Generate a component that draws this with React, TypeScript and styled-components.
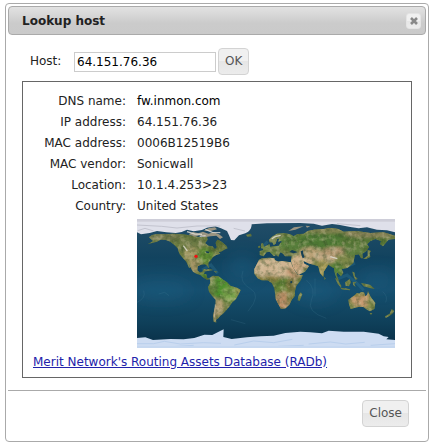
import React, { useState } from "react";
import styled, { createGlobalStyle } from "styled-components";

const GlobalStyle = createGlobalStyle`
  *, *::before, *::after { box-sizing: border-box; }
  body {
    margin: 0;
    background: #fff;
    color: #222;
    font: 12px/21px Verdana, "DejaVu Sans", sans-serif;
  }
`;

const Dialog = styled.section`
  margin: 3px 4px 3px 5px;
  padding: 2px;
  border: 1px solid #aaa;
  border-radius: 4px;
  background: #fff;
`;

const TitleBar = styled.header`
  display: flex;
  align-items: center;
  justify-content: space-between;
  height: 29px;
  padding: 1px 4px 0 13px;
  border: 1px solid #aaa;
  border-radius: 4px;
  background: linear-gradient(#e2e2e2, #cbcbcb 60%, #cacaca);
`;

const Title = styled.h1`
  margin: 0;
  font-size: 12px;
  font-weight: bold;
`;

const Button = styled.button`
  height: 27px;
  padding: 0 6px;
  border: 1px solid #d3d3d3;
  border-radius: 4px;
  background: linear-gradient(#f0f0f0 50%, #e6e6e6 50%, #ececec);
  color: #555;
  font: inherit;
`;

const IconButton = styled(Button)`
  display: grid;
  place-items: center;
  width: 15px;
  height: 16px;
  padding: 0;
  border-color: #e4e4e4;
  border-radius: 3px;
`;

const Content = styled.div`
  padding: 13px 14px 12px;
`;

const HostForm = styled.form`
  display: flex;
  align-items: center;
  padding-left: 8px;
  margin-bottom: 6px;
`;

const HostLabel = styled.label`
  width: 44px;
`;

const HostInput = styled.input`
  width: 142px;
  height: 20px;
  margin-right: 2px;
  padding: 1px 2px 0;
  border: 1px solid #ccc;
  background: #fff;
  color: #000;
  font: inherit;
`;

const Results = styled.div`
  padding: 9px 16px 4px 10px;
  border: 1px solid #666;
`;

const Details = styled.table`
  width: 100%;
  border-collapse: collapse;
`;

const Name = styled.th`
  width: 104px;
  padding: 0 11px 0 0;
  font-weight: normal;
  text-align: right;
  white-space: nowrap;
`;

const Value = styled.td<{ $strong?: boolean }>`
  padding: 0;
  color: ${({ $strong }) => ($strong ? "#000" : "#222")};
`;

const MapSvg = styled.svg`
  display: block;
  width: 100%;
  margin: 2px 0 4px;
`;

const Link = styled.a`
  color: #2222aa;
`;

const Footer = styled.footer`
  display: flex;
  justify-content: flex-end;
  padding: 9px 17px 12px;
  border-top: 1px solid #aaa;
`;

const LAND = [
  "M36 55L45 48 60 45 85 46 110 44 140 46 165 50 190 55 210 52 212 62 204 72 214 80 226 82 234 91 240 85 236 72 241 62 250 66 258 72 268 80 272 88 262 92 252 98 245 100 250 104 238 108 228 114 222 122 215 130 214 138 217 149 210 140 204 136 192 137 182 142 181 154 188 160 196 158 200 150 206 150 203 160 200 164 208 166 210 176 221 180 210 182 200 176 190 168 178 164 168 158 162 148 155 134 159 146 156 146 148 128 138 118 128 106 124 96 122 88 112 78 100 68 85 62 70 62 60 68 45 72 32 76 48 66Z",
  "M218 176L228 170 245 172 258 182 270 190 280 200 300 206 311 213 305 226 297 240 286 250 278 262 268 274 258 284 250 290 244 298 237 302 238 311 230 308 228 290 232 272 236 256 236 242 226 232 216 218 213 204 220 192Z",
  "M366 122L375 118 398 116 412 118 414 124 425 128 435 126 450 128 462 130 466 142 474 156 482 168 498 168 490 186 478 200 474 216 474 230 464 242 458 256 446 268 432 270 424 256 416 240 414 222 412 208 404 192 392 184 374 184 362 178 352 164 352 150 360 134Z",
  "M368 108L368 96 380 94 376 86 388 80 397 76 400 84 412 82 426 80 430 72 438 68 430 66 424 68 427 58 420 60 416 74 410 78 406 70 398 70 396 62 404 54 420 44 440 42 460 46 470 52 480 46 500 44 512 36 530 32 560 30 580 26 604 30 620 38 660 36 700 42 740 40 774 50 774 60 755 62 748 70 738 82 730 76 732 66 715 60 700 66 690 76 696 84 688 96 676 104 678 118 672 118 666 106 654 107 649 132 631 147 614 150 619 162 612 172 601 160 598 166 606 185 600 182 594 164 591 147 584 144 574 137 560 158 559 174 549 162 544 142 529 137 514 133 499 125 502 134 516 141 504 158 484 168 469 146 462 126 464 112 444 112 438 104 430 100 424 113 412 104 406 98 416 110 410 111 398 98 388 100 380 112Z",
  "M634 242L654 228 660 222 667 224 672 219 681 220 685 232 690 228 693 216 701 234 715 252 712 270 699 277 690 272 679 264 664 264 641 270 636 256Z",
  "M491 220L496 226 488 246 482 244 484 230ZM698 282L706 282 702 288ZM764 270L772 276 766 284 756 292 746 297 744 292 758 284ZM594 176L602 182 613 200 612 206 602 194ZM610 206L625 208 640 211 638 214 614 211ZM624 190L638 180 642 190 636 202 626 200ZM647 190L659 188 652 194 656 204 649 199ZM672 192L685 194 700 198 713 210 698 207 680 202ZM646 158L652 160 654 172 662 180 655 182 649 170ZM692 92L702 96 698 102 700 114 688 120 678 120 692 110ZM372 74L378 72 381 86 372 88ZM364 81L370 80 369 86 363 86ZM327 47L342 44 344 52 331 53ZM196 158Q210 145 228 153L218 155ZM230 156L242 158 236 161ZM561 174L566 178 563 183Z",
].join("");

const ARCTIC_ICE =
  "M0 0H774V40L750 34 720 32 690 25 665 28 640 24 605 17 585 15 555 20 530 14 490 12 390 13 344 16C344 28 338 38 325 43L306 49 292 64 282 63 276 49 270 36 252 28 235 22 210 26 195 33 170 37 150 32 134 39 116 42 88 40 60 36 38 42 12 46 0 40Z";

const SOUTH_ICE =
  "M0 357L25 355 48 363 100 360 140 361 172 357 202 347 226 348 242 340 260 331 259 354 284 360 330 355 370 352 410 350 445 342 490 338 520 340 555 343 575 335 620 338 680 338 725 344 740 352 755 354 748 361 774 363V387H0Z";

type Patch = [number, number, number, number, string];

const PATCHES: Patch[] = [
  [84, 54, 50, 12, "#73794f"],
  [170, 70, 50, 15, "#6e7c45"],
  [164, 108, 24, 25, "#a09862"],
  [205, 110, 24, 24, "#5b8a32"],
  [244, 74, 25, 18, "#5e7035"],
  [174, 140, 16, 20, "#a29363"],
  [203, 171, 14, 8, "#4f8233"],
  [250, 205, 30, 30, "#4f902f"],
  [278, 226, 23, 24, "#76a048"],
  [229, 202, 12, 22, "#63873f"],
  [247, 266, 14, 26, "#b4a073"],
  [233, 272, 7, 38, "#aa9472"],
  [303, 215, 8, 12, "#a1a156"],
  [409, 148, 65, 32, "#d0b592"],
  [472, 160, 22, 20, "#bd926c"],
  [395, 179, 42, 9, "#847c3d"],
  [438, 202, 25, 24, "#628336"],
  [464, 197, 18, 20, "#7c763c"],
  [440, 244, 28, 27, "#bd8f68"],
  [460, 236, 12, 20, "#828044"],
  [402, 91, 33, 19, "#71894a"],
  [420, 60, 25, 17, "#848f5a"],
  [482, 72, 60, 25, "#587f3a"],
  [580, 63, 95, 28, "#507a34"],
  [680, 65, 70, 25, "#547635"],
  [580, 34, 80, 10, "#81834f"],
  [700, 46, 80, 10, "#888359"],
  [495, 128, 35, 24, "#cfb18b"],
  [480, 148, 20, 20, "#d0ab86"],
  [518, 103, 33, 19, "#b9a176"],
  [574, 113, 44, 18, "#c1a783"],
  [597, 98, 45, 14, "#b2966f"],
  [622, 125, 30, 21, "#7d8848"],
  [655, 95, 34, 18, "#608040"],
  [556, 148, 18, 27, "#a69a54"],
  [599, 151, 19, 22, "#588438"],
  [674, 244, 34, 22, "#c69a70"],
  [666, 226, 20, 8, "#888345"],
  [703, 252, 12, 25, "#899150"],
  [643, 261, 10, 12, "#858b50"],
];

function WorldMap() {
  return (
    <MapSvg viewBox="0 0 774 387" role="img" aria-label="World map with the host location">
      <defs>
        <linearGradient id="ocean" x2="0" y2="1">
          <stop offset="0" stopColor="#234e68" />
          <stop offset="0.3" stopColor="#12435f" />
          <stop offset="0.55" stopColor="#164f6f" />
          <stop offset="0.8" stopColor="#0f405a" />
          <stop offset="1" stopColor="#092d45" />
        </linearGradient>
        <filter id="soft" x="-50%" y="-50%" width="200%" height="200%">
          <feGaussianBlur stdDeviation="5" />
        </filter>
        <filter id="glow" x="-100%" y="-100%" width="300%" height="300%">
          <feGaussianBlur stdDeviation="22" />
        </filter>
        <filter id="coast" x="0" y="0" width="100%" height="100%">
          <feTurbulence type="fractalNoise" baseFrequency="0.16" numOctaves="3" seed="4" result="noise" />
          <feDisplacementMap in="SourceGraphic" in2="noise" scale="3" xChannelSelector="R" yChannelSelector="G" />
        </filter>
        <filter id="terrain" x="0" y="0" width="100%" height="100%">
          <feTurbulence type="fractalNoise" baseFrequency="0.07" numOctaves="3" seed="8" />
          <feColorMatrix values="0 0 0 0 0.04 0 0 0 0 0.08 0 0 0 0 0.02 2.4 0 0 0 -1" />
        </filter>
        <filter id="highland" x="0" y="0" width="100%" height="100%">
          <feTurbulence type="fractalNoise" baseFrequency="0.06" numOctaves="3" seed="15" />
          <feColorMatrix values="0 0 0 0 0.7 0 0 0 0 0.6 0 0 0 0 0.4 0 2.6 0 0 -1.2" />
        </filter>
        <clipPath id="land">
          <path d={LAND} />
        </clipPath>
      </defs>
      <rect width="774" height="387" fill="url(#ocean)" />
      <g filter="url(#glow)" fill="#1f5d80" opacity="0.5">
        <ellipse cx="72" cy="215" rx="90" ry="30" />
        <ellipse cx="315" cy="145" rx="45" ry="35" />
        <ellipse cx="535" cy="215" rx="65" ry="35" />
        <ellipse cx="720" cy="184" rx="55" ry="27" />
      </g>
      <path
        d="M0 250Q28 237 20 215M65 225L83 220 96 230M318 155Q305 190 340 209T333 277M508 183Q539 210 523 244T568 298M534 178V232M737 218Q754 232 746 250M282 302L325 314"
        fill="none"
        stroke="#4c829b"
        strokeWidth="3"
        opacity="0.2"
      />
      <path
        d="M195 153L222 138 242 163M604 179L630 168 660 193 680 214M628 143L654 132M374 86L392 68"
        fill="none"
        stroke="#367d9c"
        strokeWidth="9"
        opacity="0.3"
      />
      <g filter="url(#coast)">
        <g clipPath="url(#land)">
          <rect width="774" height="387" fill="#6c7c40" />
          <g filter="url(#soft)">
            {PATCHES.map(([x, y, rx, ry, fill]) => (
              <ellipse key={`${x}-${y}`} cx={x} cy={y} rx={rx} ry={ry} fill={fill} />
            ))}
          </g>
          <rect width="774" height="387" filter="url(#terrain)" opacity="0.5" />
          <rect width="774" height="387" filter="url(#highland)" opacity="0.45" />
        </g>
        <path
          d="M457 99L465 93 474 96 482 100 470 103ZM491 97L498 94 499 104 503 115 497 118 493 107ZM205 96L217 98 216 103 209 102ZM460 187L465 186 465 192 460 193Z"
          fill="#173f55"
        />
        <path
          d="M155 46L168 39 184 43 198 38 214 44 230 40 246 46 258 55 249 60 238 50 220 52 203 55 187 49 174 53ZM200 35L216 27 234 25 240 31 221 36ZM454 36L471 25 500 22 475 32ZM506 20L520 22 510 26Z"
          fill="#9b9582"
        />
        <path
          d="M150 38L173 45 195 46M205 31L226 40 250 41M188 52L206 50M139 80L151 96M404 60L414 53 431 49M580 113L601 119"
          fill="none"
          stroke="#e2ded7"
          strokeWidth="4"
          opacity="0.8"
        />
        <path d="M235 256L232 295" fill="none" stroke="#d0c2a6" strokeWidth="3" opacity="0.6" />
        <path d={ARCTIC_ICE} fill="#dfe0ea" />
        <path
          d="M0 18L74 22 120 27 180 21 250 21M290 28L324 36M2 35L24 28 50 36M600 14L670 20"
          fill="none"
          stroke="#c3c4cf"
          strokeWidth="3"
        />
        <path d={SOUTH_ICE} fill="#cddcf2" />
        <path
          d="M0 374H50L82 367 130 375 200 371 252 373M292 378L350 366 410 371 466 361M515 375L580 369 626 375 683 370M701 379L774 374M90 384L170 379M424 382L500 379"
          fill="none"
          stroke="#b9cfec"
          strokeWidth="3"
        />
      </g>
      <rect width="774" height="8" fill="#ceced9" />
      <rect y="381" width="774" height="6" fill="#c6d8f0" />
      <circle cx="177" cy="112" r="5" fill="#f01212" />
    </MapSvg>
  );
}

const ROWS = [
  { name: "DNS name:", value: "fw.inmon.com", strong: true },
  { name: "IP address:", value: "64.151.76.36" },
  { name: "MAC address:", value: "0006B12519B6" },
  { name: "MAC vendor:", value: "Sonicwall" },
  { name: "Location:", value: "10.1.4.253>23" },
  { name: "Country:", value: "United States" },
];

export default function App() {
  const [host, setHost] = useState("64.151.76.36");

  return (
    <>
      <GlobalStyle />
      <Dialog role="dialog" aria-labelledby="dialog-title">
        <TitleBar>
          <Title id="dialog-title">Lookup host</Title>
          <IconButton type="button" aria-label="Close dialog">
            <svg width="8" height="8" viewBox="0 0 8 8" aria-hidden="true">
              <path d="M1 1L7 7M7 1L1 7" stroke="#888" strokeWidth="2.6" />
            </svg>
          </IconButton>
        </TitleBar>
        <Content>
          <HostForm onSubmit={(event) => event.preventDefault()}>
            <HostLabel htmlFor="host">Host:</HostLabel>
            <HostInput id="host" value={host} onChange={(event) => setHost(event.target.value)} />
            <Button type="submit">OK</Button>
          </HostForm>
          <Results>
            <Details>
              <tbody>
                {ROWS.map((row) => (
                  <tr key={row.name}>
                    <Name scope="row">{row.name}</Name>
                    <Value $strong={row.strong}>{row.value}</Value>
                  </tr>
                ))}
                <tr>
                  <Value />
                  <Value>
                    <WorldMap />
                  </Value>
                </tr>
              </tbody>
            </Details>
            <Link href="#radb">Merit Network's Routing Assets Database (RADb)</Link>
          </Results>
        </Content>
        <Footer>
          <Button type="button">Close</Button>
        </Footer>
      </Dialog>
    </>
  );
}
